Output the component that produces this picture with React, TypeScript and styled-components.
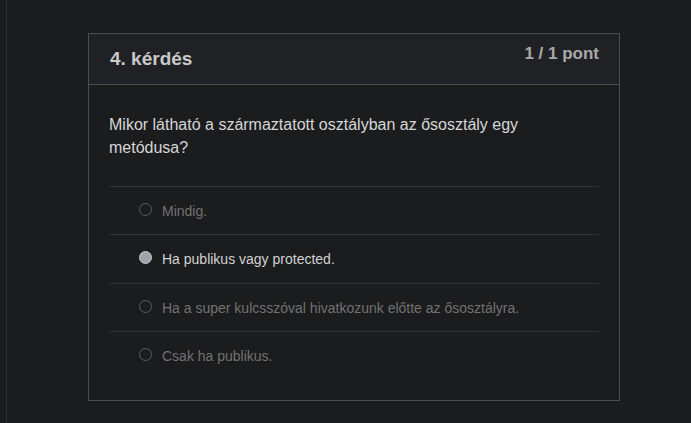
import React from "react";
import styled, { createGlobalStyle } from "styled-components";

const Global = createGlobalStyle`
  html, body { margin: 0; padding: 0; background: #1b1c1e; }
  body { font-family: "Liberation Sans", Arial, sans-serif; height: 423px; overflow: hidden; }
`;

const Page = styled.div`
  display: flex;
  min-height: 423px;
`;

const Rail = styled.div`
  width: 6px;
  border-right: 1px solid #2f3033;
  flex-shrink: 0;
`;

const Main = styled.main`
  padding: 33px 0 0 81px;
  flex: 1;
`;

const Card = styled.section`
  width: 530px;
  border: 1px solid #4d4d50;
  background: #1b1c1e;
`;

const Header = styled.header`
  display: flex;
  justify-content: space-between;
  align-items: flex-start;
  height: 50px;
  padding: 0 20px 0 21px;
  background: #202124;
  border-bottom: 1px solid #4d4d50;
`;

const Title = styled.h3`
  margin: 13px 0 0;
  font-size: 19px;
  line-height: 23px;
  font-weight: 700;
  color: #c9c9c9;
`;

const Points = styled.div`
  margin-top: 10px;
  font-size: 17px;
  line-height: 20px;
  font-weight: 700;
  color: #a9a9a9;
`;

const Body = styled.div`
  padding: 28px 20px 21px;
`;

const Question = styled.p`
  margin: 0 0 27px;
  font-size: 16px;
  line-height: 23px;
  color: #d6d6d6;
`;

const Options = styled.ul`
  list-style: none;
  margin: 0;
  padding: 0;
`;

const Option = styled.li<{ $selected?: boolean }>`
  display: flex;
  align-items: flex-start;
  gap: 10px;
  padding: 14px 0 13.34px 30px;
  border-top: 1px solid #333437;
  font-size: 14px;
  line-height: 20px;
  color: ${(p) => (p.$selected ? "#d2d2d2" : "#727272")};
`;

const Radio = styled.span<{ $checked?: boolean }>`
  box-sizing: border-box;
  width: 13px;
  height: 13px;
  margin-top: 2px;
  border-radius: 50%;
  flex-shrink: 0;
  border: ${(p) => (p.$checked ? "1.5px solid #c8c8ce" : "1px solid #5e5e61")};
  background: ${(p) => (p.$checked ? "#a2a2ac" : "transparent")};
`;

const options = [
  "Mindig.",
  "Ha publikus vagy protected.",
  "Ha a super kulcsszóval hivatkozunk előtte az ősosztályra.",
  "Csak ha publikus.",
];
const selected = 1;

export default function App() {
  return (
    <>
      <Global />
      <Page>
        <Rail />
        <Main>
          <Card>
            <Header>
              <Title>4. kérdés</Title>
              <Points>1 / 1 pont</Points>
            </Header>
            <Body>
              <Question>
                Mikor látható a származtatott osztályban az ősosztály egy metódusa?
              </Question>
              <Options>
                {options.map((o, i) => (
                  <Option key={o} $selected={i === selected}>
                    <Radio $checked={i === selected} />
                    <span>{o}</span>
                  </Option>
                ))}
              </Options>
            </Body>
          </Card>
        </Main>
      </Page>
    </>
  );
}
